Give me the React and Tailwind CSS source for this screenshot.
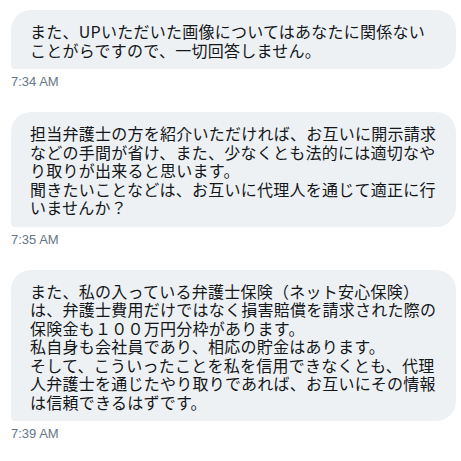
const MESSAGES = [
  {
    time: '7:34 AM',
    lines: [
      'また、UPいただいた画像についてはあなたに関係ない',
      'ことがらですので、一切回答しません。',
    ],
  },
  {
    time: '7:35 AM',
    lines: [
      '担当弁護士の方を紹介いただければ、お互いに開示請求',
      'などの手間が省け、また、少なくとも法的には適切なや',
      'り取りが出来ると思います。',
      '聞きたいことなどは、お互いに代理人を通じて適正に行',
      'いませんか？',
    ],
  },
  {
    time: '7:39 AM',
    lines: [
      'また、私の入っている弁護士保険（ネット安心保険）',
      'は、弁護士費用だけではなく損害賠償を請求された際の',
      '保険金も１００万円分枠があります。',
      '私自身も会社員であり、相応の貯金はあります。',
      'そして、こういったことを私を信用できなくとも、代理',
      '人弁護士を通じたやり取りであれば、お互いにその情報',
      'は信頼できるはずです。',
    ],
  },
];

function Message({ time, lines }) {
  return (
    <div className="flex flex-col">
      <div className="ml-[11px] mr-[5px] bg-[#eef1f4] rounded-tl-[20px] rounded-tr-[20px] rounded-br-[20px] rounded-bl-[4px] pl-[19px] pr-[12px] pt-[12px] pb-[10px]">
        {lines.map((line, i) => (
          <div
            key={i}
            className="whitespace-nowrap text-[16px] leading-[18.5px] tracking-[0.25px] text-[#14171a] font-['Noto_Sans_CJK_JP',sans-serif]"
          >
            {line}
          </div>
        ))}
      </div>
      <div className="mt-[5px] ml-[11px] h-[16px] text-[13px] leading-[16px] text-[#657786] font-['Liberation_Sans','Noto_Sans',sans-serif]">
        {time}
      </div>
    </div>
  );
}

export default function App() {
  return (
    <div className="w-[461px] h-[461px] bg-white pt-[10px] flex flex-col gap-[22px] overflow-hidden">
      {MESSAGES.map((m) => (
        <Message key={m.time} time={m.time} lines={m.lines} />
      ))}
    </div>
  );
}
